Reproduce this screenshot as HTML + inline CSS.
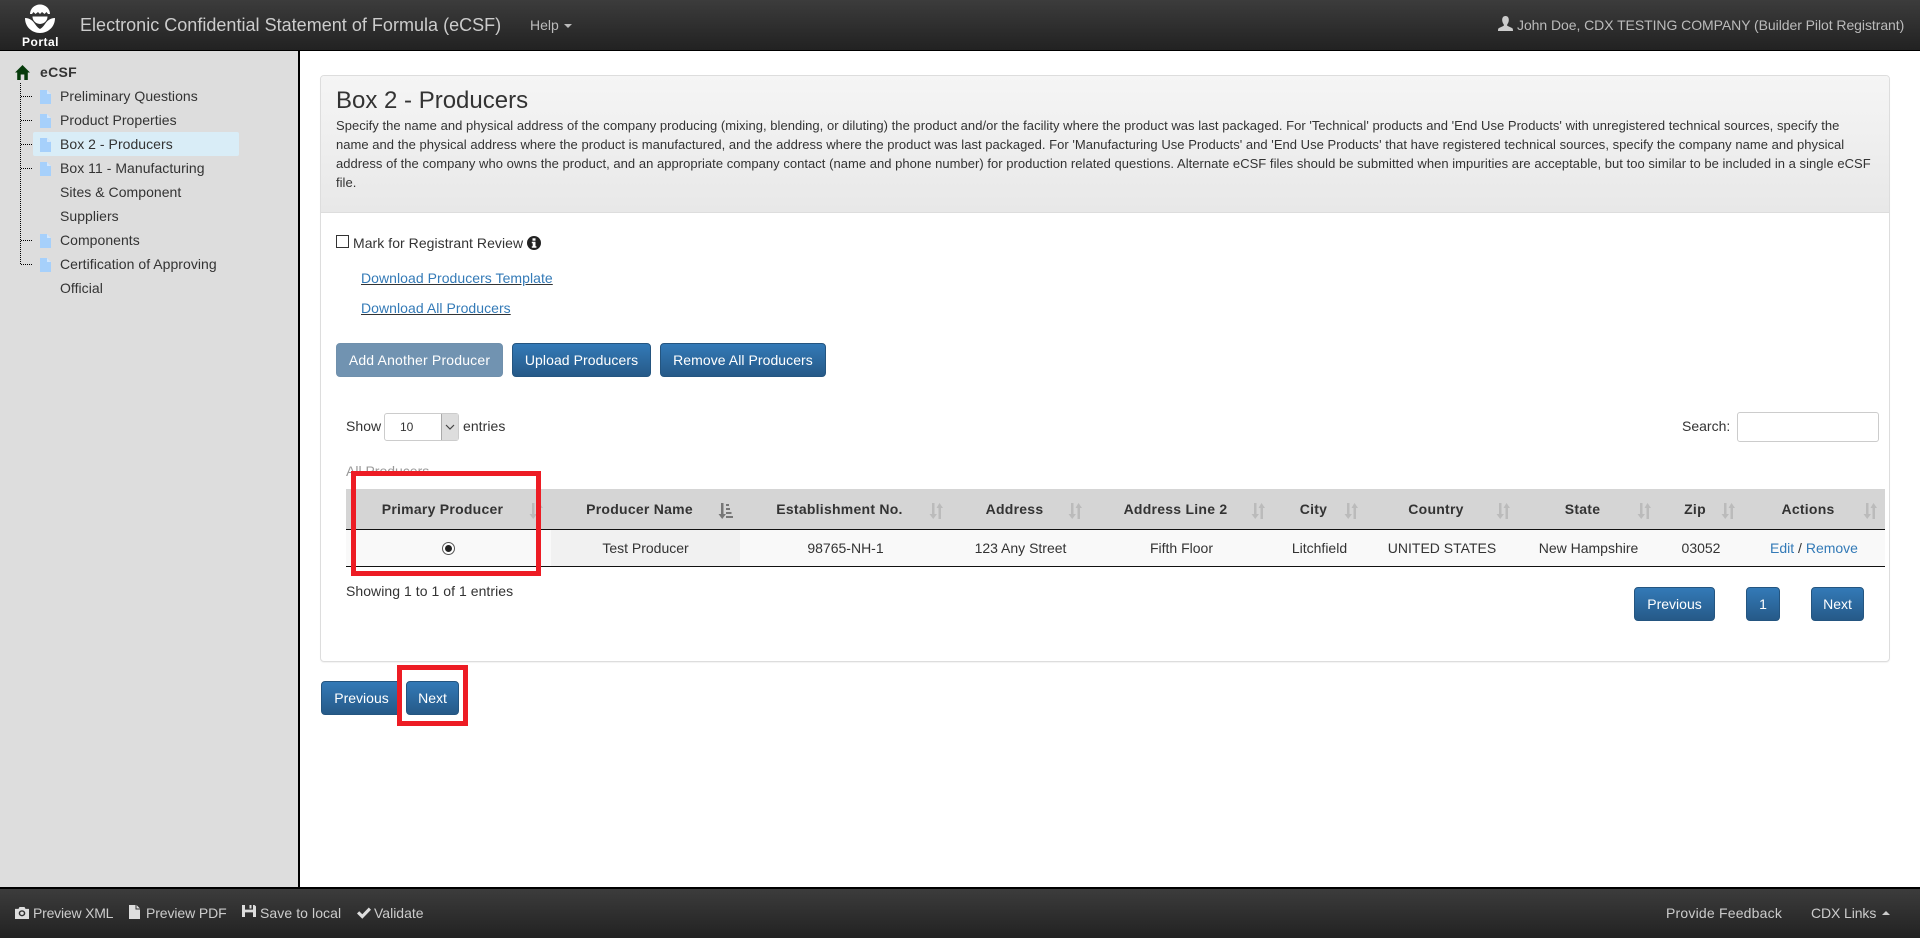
<!DOCTYPE html>
<html lang="en"><head><meta charset="utf-8"><title>eCSF</title>
<style>
*{box-sizing:border-box}
html,body{margin:0;padding:0;width:1920px;height:938px;overflow:hidden;background:#fff;font-family:"Liberation Sans",Arial,sans-serif;font-size:14px;color:#333}
.abs{position:absolute}
#hdr{position:absolute;left:0;top:0;width:1920px;height:51px;background:linear-gradient(#3c3c3c,#222);border-bottom:1px solid #000}
#ftr{position:absolute;left:0;top:887px;width:1920px;height:51px;background:linear-gradient(#3c3c3c,#222);border-top:2px solid #000;color:#ccc}
#side{position:absolute;left:0;top:51px;width:300px;height:836px;background:#ddd;border-right:2px solid #000}
.tx{position:absolute;white-space:nowrap;line-height:20px}
.row{position:absolute;left:60px;white-space:nowrap;line-height:24px;height:24px;color:#333;letter-spacing:.04px}
.fi{position:absolute;left:40px;width:11px;height:14px}
.hl{position:absolute;left:21px;width:12px;height:1px;background:repeating-linear-gradient(90deg,#000 0 1px,transparent 1px 2px)}
#panel{position:absolute;left:320px;top:75px;width:1570px;height:587px;border:1px solid #ddd;border-radius:4px;box-shadow:0 1px 1px rgba(0,0,0,.05)}
#ph{position:absolute;left:0;top:0;width:1568px;height:138px;background:linear-gradient(#f5f5f5,#e8e8e8);border-bottom:1px solid #ddd;border-radius:3px 3px 0 0}
#ph h3{position:absolute;left:15px;top:11px;margin:0;font-size:24px;font-weight:400;line-height:28px;color:#333}
#ph p{position:absolute;left:15px;top:39.500px;width:1545px;margin:0;font-size:13px;line-height:19px;color:#333;white-space:nowrap;letter-spacing:.03px}
.lnk{position:absolute;left:361px;line-height:20px;color:#337ab7;text-decoration:underline;text-decoration-color:#333;white-space:nowrap;letter-spacing:.05px}
.btn{position:absolute;height:34px;line-height:32px;text-align:center;color:#fff;background:linear-gradient(#337ab7,#265a88);border:1px solid #245580;border-radius:4px;white-space:nowrap}
.dis{opacity:.65;background:#265a88;border-color:#245580}
table{position:absolute;left:346px;top:489px;width:1539px;border-collapse:separate;border-spacing:0;table-layout:fixed;font-size:14px}
th{position:relative;height:41px;background:#d5d5d5;border-bottom:1px solid #111;padding:0 20px 0 8px;font-weight:700;text-align:center;color:#333;letter-spacing:.25px;white-space:nowrap}
td{height:37px;background:#f9f9f9;border-bottom:1px solid #111;padding:0;text-align:center;white-space:nowrap;color:#333}
td.s{background:#f1f1f1}
th svg{position:absolute;right:8px;top:14px}
.red{position:absolute;border:5px solid #ed1c24;background:transparent}
#ftr .tx{color:#ccc}
</style></head><body>

<div id="hdr">
<svg class="abs" style="left:20px;top:3px" width="40" height="33" viewBox="0 0 40 33">
<path d="M10 11 A10 9.500 0 0 1 30 11 L28 11 L26.500 9 L24.500 11 L22 9 L20 11 L18 9 L15.500 11 L13.500 9 L12 11Z" fill="#fff"/>
<path d="M12.500 13.500 L27.500 13.500 A7.500 7.500 0 0 1 12.500 13.500Z" fill="#fff"/>
<path d="M5 15 C10 15 13 18 15 21 C17 24 19 25.500 20 26 C21 25.500 23 24 25 21 C27 18 30 15 35 15 C35 24 28 30 20 30 C12 30 5 24 5 15Z" fill="#fff"/>
</svg>
<div class="abs" style="left:22px;top:36px;font-size:12px;font-weight:700;color:#fff;line-height:12px;letter-spacing:.5px">Portal</div>
<div class="tx" style="left:80px;top:15px;font-size:18px;color:#ccc;letter-spacing:.02px">Electronic Confidential Statement of Formula (eCSF)</div>
<div class="tx" style="left:530px;top:15px;color:#bbb">Help</div>
<div class="abs" style="left:564px;top:24px;width:0;height:0;border-left:4px solid transparent;border-right:4px solid transparent;border-top:4px solid #bbb"></div>
<svg class="abs" style="left:1498px;top:16px" width="15" height="15" viewBox="0 0 15 15"><path d="M7.500 0C5 0 4 2 4.200 4.500C4.400 6.500 5.200 7.600 5.800 8.500L5.800 9.800L1 12C0.300 12.400 0 13 0 15L15 15C15 13 14.700 12.400 14 12L9.200 9.800L9.200 8.500C9.800 7.600 10.600 6.500 10.800 4.500C11 2 10 0 7.500 0Z" fill="#ccc"/></svg>
<div class="tx" style="left:1517px;top:15px;color:#bbb;letter-spacing:-.06px">John Doe, CDX TESTING COMPANY (Builder Pilot Registrant)</div>
</div>

<div id="side"></div>
<div class="abs" style="left:33px;top:132px;width:206px;height:24px;background:#d9edf7;border-radius:2px"></div>
<svg class="abs" style="left:15px;top:65px" width="15" height="15" viewBox="0 0 15 15"><path d="M7.500 0L15 7.500L12.800 7.500L12.800 15L9.300 15L9.300 9.500L5.700 9.500L5.700 15L2.200 15L2.200 7.500L0 7.500Z" fill="#063b0b"/></svg>
<div class="tx" style="left:40px;top:62px;font-size:14px;font-weight:700;letter-spacing:.3px;color:#333">eCSF</div>
<div class="abs" style="left:20px;top:83px;width:1px;height:182px;background:repeating-linear-gradient(180deg,#000 0 1px,transparent 1px 2px)"></div>
<div class="hl" style="top:96px"></div><div class="hl" style="top:120px"></div><div class="hl" style="top:144px"></div><div class="hl" style="top:168px"></div><div class="hl" style="top:240px"></div><div class="hl" style="top:264px"></div>
<svg class="fi" style="top:90px" viewBox="0 0 11 14"><path d="M0 0H7L11 4V14H0Z" fill="#a6d0fb"/><path d="M7 0L11 4H7Z" fill="#d4e7fb"/></svg>
<svg class="fi" style="top:114px" viewBox="0 0 11 14"><path d="M0 0H7L11 4V14H0Z" fill="#a6d0fb"/><path d="M7 0L11 4H7Z" fill="#d4e7fb"/></svg>
<svg class="fi" style="top:138px" viewBox="0 0 11 14"><path d="M0 0H7L11 4V14H0Z" fill="#a6d0fb"/><path d="M7 0L11 4H7Z" fill="#d4e7fb"/></svg>
<svg class="fi" style="top:162px" viewBox="0 0 11 14"><path d="M0 0H7L11 4V14H0Z" fill="#a6d0fb"/><path d="M7 0L11 4H7Z" fill="#d4e7fb"/></svg>
<svg class="fi" style="top:234px" viewBox="0 0 11 14"><path d="M0 0H7L11 4V14H0Z" fill="#a6d0fb"/><path d="M7 0L11 4H7Z" fill="#d4e7fb"/></svg>
<svg class="fi" style="top:258px" viewBox="0 0 11 14"><path d="M0 0H7L11 4V14H0Z" fill="#a6d0fb"/><path d="M7 0L11 4H7Z" fill="#d4e7fb"/></svg>
<div class="row" style="top:84px">Preliminary Questions</div>
<div class="row" style="top:108px">Product Properties</div>
<div class="row" style="top:132px">Box 2 - Producers</div>
<div class="row" style="top:156px">Box 11 - Manufacturing</div>
<div class="row" style="top:180px">Sites &amp; Component</div>
<div class="row" style="top:204px">Suppliers</div>
<div class="row" style="top:228px">Components</div>
<div class="row" style="top:252px">Certification of Approving</div>
<div class="row" style="top:276px">Official</div>

<div id="panel"><div id="ph" style="height:137px">
<h3>Box 2 - Producers</h3>
<p>Specify the name and physical address of the company producing (mixing, blending, or diluting) the product and/or the facility where the product was last packaged. For 'Technical' products and 'End Use Products' with unregistered technical sources, specify the<br>name and the physical address where the product is manufactured, and the address where the product was last packaged. For 'Manufacturing Use Products' and 'End Use Products' that have registered technical sources, specify the company name and physical<br>address of the company who owns the product, and an appropriate company contact (name and phone number) for production related questions. Alternate eCSF files should be submitted when impurities are acceptable, but too similar to be included in a single eCSF<br>file.</p>
</div></div>

<div class="abs" style="left:336px;top:235px;width:13px;height:13px;border:1px solid #333;background:#fff"></div>
<div class="tx" style="left:353px;top:233px;letter-spacing:.05px">Mark for Registrant Review</div>
<svg class="abs" style="left:527px;top:236px" width="14" height="14" viewBox="0 0 14 14"><circle cx="7" cy="7" r="7" fill="#222"/><rect x="5.500" y="2.300" width="3" height="2.400" fill="#fff"/><path d="M4.800 5.800H8.500V10.200H9.400V11.700H4.800V10.200H5.700V7.300H4.800Z" fill="#fff"/></svg>
<div class="lnk" style="top:268px">Download Producers Template</div>
<div class="lnk" style="top:298px">Download All Producers</div>

<div class="btn dis" style="left:336px;top:343px;width:167px;letter-spacing:.18px">Add Another Producer</div>
<div class="btn" style="left:512px;top:343px;width:139px;letter-spacing:.08px">Upload Producers</div>
<div class="btn" style="left:660px;top:343px;width:166px;letter-spacing:.06px">Remove All Producers</div>

<div class="tx" style="left:346px;top:416px;letter-spacing:.05px">Show</div>
<div class="abs" style="left:384px;top:413px;width:75px;height:28px;border:1px solid #ccc;border-radius:3px;background:#fff;font-size:12px;line-height:26px;padding-left:15px">10
<div class="abs" style="right:0;top:0;width:17px;height:26px;background:#ddd;border-left:1px solid #aaa"><svg class="abs" style="left:3px;top:10px" width="10" height="6" viewBox="0 0 10 6"><path d="M1 1L5 5L9 1" fill="none" stroke="#444" stroke-width="1.200"/></svg></div></div>
<div class="tx" style="left:463px;top:416px;letter-spacing:.05px">entries</div>
<div class="tx" style="left:1682px;top:416px">Search:</div>
<div class="abs" style="left:1737px;top:412px;width:142px;height:30px;border:1px solid #ccc;border-radius:3px;background:#fff"></div>
<div class="tx" style="left:346px;top:461px;color:#999">All Producers</div>

<table>
<colgroup><col style="width:205px"><col style="width:189px"><col style="width:211px"><col style="width:139px"><col style="width:183px"><col style="width:93px"><col style="width:152px"><col style="width:141px"><col style="width:84px"><col style="width:142px"></colgroup>
<thead><tr>
<th>Primary Producer<svg width="14" height="16" viewBox="0 0 14 16"><g fill="#bbb"><path d="M3 0H5.500V11H8L4.200 16L0.500 11H3Z"/><path d="M10.500 0L14 5H12V16H9.500V5H7.500Z"/></g></svg></th>
<th>Producer Name<svg style="right:7px" width="15" height="16" viewBox="0 0 15 16"><path d="M3 0H5.500V11H8L4.200 16L0.500 11H3Z" fill="#777"/><path d="M8 1H11V3H8ZM8 5H12V7H8ZM8 9H13.500V11H8ZM8 13H15V15H8Z" fill="#777"/></svg></th>
<th>Establishment No.<svg width="14" height="16" viewBox="0 0 14 16"><g fill="#bbb"><path d="M3 0H5.500V11H8L4.200 16L0.500 11H3Z"/><path d="M10.500 0L14 5H12V16H9.500V5H7.500Z"/></g></svg></th>
<th>Address<svg width="14" height="16" viewBox="0 0 14 16"><g fill="#bbb"><path d="M3 0H5.500V11H8L4.200 16L0.500 11H3Z"/><path d="M10.500 0L14 5H12V16H9.500V5H7.500Z"/></g></svg></th>
<th>Address Line 2<svg width="14" height="16" viewBox="0 0 14 16"><g fill="#bbb"><path d="M3 0H5.500V11H8L4.200 16L0.500 11H3Z"/><path d="M10.500 0L14 5H12V16H9.500V5H7.500Z"/></g></svg></th>
<th>City<svg width="14" height="16" viewBox="0 0 14 16"><g fill="#bbb"><path d="M3 0H5.500V11H8L4.200 16L0.500 11H3Z"/><path d="M10.500 0L14 5H12V16H9.500V5H7.500Z"/></g></svg></th>
<th>Country<svg width="14" height="16" viewBox="0 0 14 16"><g fill="#bbb"><path d="M3 0H5.500V11H8L4.200 16L0.500 11H3Z"/><path d="M10.500 0L14 5H12V16H9.500V5H7.500Z"/></g></svg></th>
<th>State<svg width="14" height="16" viewBox="0 0 14 16"><g fill="#bbb"><path d="M3 0H5.500V11H8L4.200 16L0.500 11H3Z"/><path d="M10.500 0L14 5H12V16H9.500V5H7.500Z"/></g></svg></th>
<th>Zip<svg width="14" height="16" viewBox="0 0 14 16"><g fill="#bbb"><path d="M3 0H5.500V11H8L4.200 16L0.500 11H3Z"/><path d="M10.500 0L14 5H12V16H9.500V5H7.500Z"/></g></svg></th>
<th>Actions<svg width="14" height="16" viewBox="0 0 14 16"><g fill="#bbb"><path d="M3 0H5.500V11H8L4.200 16L0.500 11H3Z"/><path d="M10.500 0L14 5H12V16H9.500V5H7.500Z"/></g></svg></th>
</tr></thead>
<tbody><tr>
<td><svg width="13" height="13" viewBox="0 0 13 13" style="display:block;margin:0 auto"><circle cx="6.500" cy="6.500" r="6" fill="#fff" stroke="#555"/><circle cx="6.500" cy="6.500" r="3.500" fill="#222"/></svg></td>
<td class="s">Test Producer</td><td>98765-NH-1</td><td>123 Any Street</td><td>Fifth Floor</td><td>Litchfield</td><td>UNITED STATES</td><td>New Hampshire</td><td>03052</td>
<td><span style="color:#337ab7">Edit</span> / <span style="color:#337ab7">Remove</span></td>
</tr></tbody></table>

<div class="tx" style="left:346px;top:581px;letter-spacing:.05px">Showing 1 to 1 of 1 entries</div>
<div class="btn" style="left:1634px;top:587px;width:81px">Previous</div>
<div class="btn" style="left:1746px;top:587px;width:34px">1</div>
<div class="btn" style="left:1811px;top:587px;width:53px">Next</div>

<div class="btn" style="left:321px;top:681px;width:81px">Previous</div>
<div class="btn" style="left:406px;top:681px;width:53px">Next</div>

<div class="red" style="left:351px;top:471px;width:190px;height:105px"></div>
<div class="red" style="left:397px;top:665px;width:71px;height:61px"></div>

<div id="ftr">
<svg class="abs" style="left:15px;top:18px" width="14" height="12" viewBox="0 0 14 13" preserveAspectRatio="none"><path fill-rule="evenodd" d="M4.500 0H9.500L10.500 2H14V13H0V2H3.500ZM7 3.500A3.300 3.300 0 1 0 7 10.100A3.300 3.300 0 1 0 7 3.500Z" fill="#ddd"/><circle cx="7" cy="6.800" r="1.800" fill="#ddd"/></svg>
<div class="tx" style="left:33px;top:14px;letter-spacing:-.2px">Preview XML</div>
<svg class="abs" style="left:129px;top:16px" width="11" height="14" viewBox="0 0 11 14"><path d="M0 0H6.500V4.500H11V14H0Z" fill="#ddd"/><path d="M7.500 0L11 3.500H7.500Z" fill="#ddd"/></svg>
<div class="tx" style="left:146px;top:14px;letter-spacing:-.1px">Preview PDF</div>
<svg class="abs" style="left:242px;top:16px" width="14" height="12" viewBox="0 0 14 13" preserveAspectRatio="none"><path fill-rule="evenodd" d="M0 0H3V5H11V0H12.500L14 1.500V13H0ZM3 8V13H11V8Z M7.500 0H9.500V3.800H7.500Z" fill="#ddd"/></svg>
<div class="tx" style="left:260px;top:14px;letter-spacing:.08px">Save to local</div>
<svg class="abs" style="left:357px;top:18px" width="14" height="12" viewBox="0 0 14 12"><path d="M0 6.500L2.200 4.300L5.300 7.300L11.800 0.500L14 2.800L5.300 11.800Z" fill="#ddd"/></svg>
<div class="tx" style="left:374px;top:14px">Validate</div>
<div class="tx" style="left:1666px;top:14px;letter-spacing:.2px">Provide Feedback</div>
<div class="tx" style="left:1811px;top:14px;letter-spacing:-.1px">CDX Links</div>
<div class="abs" style="left:1882px;top:22px;width:0;height:0;border-left:4px solid transparent;border-right:4px solid transparent;border-bottom:4px solid #ccc"></div>
</div>
</body></html>
